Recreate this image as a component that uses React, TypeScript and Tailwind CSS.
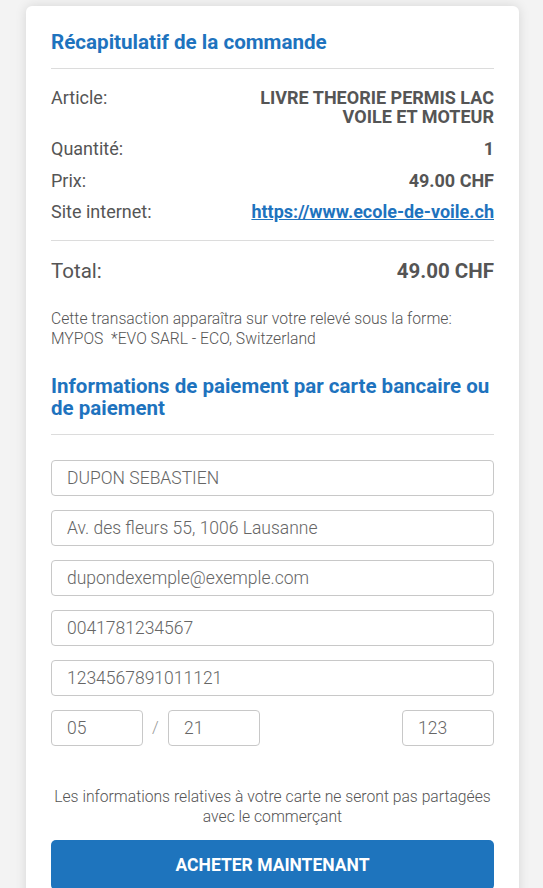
import React from "react";

const Row = ({ label, children }: { label: string; children: React.ReactNode }) => (
  <div className="flex justify-between items-start text-[18px] leading-[19px] text-[#555]">
    <span className="font-normal">{label}</span>
    <span className="font-bold text-right">{children}</span>
  </div>
);

const Field = ({ value, className = "" }: { value: string; className?: string }) => (
  <div
    className={`h-[36px] border border-[#c8c8c8] rounded-[4px] flex items-center pl-[15px] text-[17.5px] font-light text-[#666] bg-white ${className}`}
  >
    {value}
  </div>
);

export default function App() {
  return (
    <div
      className="min-h-[888px] bg-[#f3f3f3] pt-[6px] overflow-hidden"
      style={{ fontFamily: "Roboto, 'Liberation Sans', sans-serif" }}
    >
      <div className="ml-[26px] w-[493px] bg-white rounded-[6px] shadow-[0_0_12px_rgba(0,0,0,0.12)] px-[25px] pt-[24px] pb-[20px] min-h-[900px]">
        <h2 className="text-[20.6px] leading-[24px] font-bold text-[#1e73be]">Récapitulatif de la commande</h2>
        <div className="h-px bg-[#dcdcdc] mt-[14px]" />

        <div className="mt-[19px]">
          <Row label="Article:">
            LIVRE THEORIE PERMIS LAC
            <br />
            VOILE ET MOTEUR
          </Row>
        </div>
        <div className="mt-[13px]">
          <Row label="Quantité:">1</Row>
        </div>
        <div className="mt-[13px]">
          <Row label="Prix:">49.00 CHF</Row>
        </div>
        <div className="mt-[12px]">
          <Row label="Site internet:">
            <span className="text-[#1e73be] underline">https://www.ecole-de-voile.ch</span>
          </Row>
        </div>
        <div className="h-px bg-[#dcdcdc] mt-[19px]" />

        <div className="mt-[18px] flex justify-between text-[20.5px] leading-[24px] text-[#555]">
          <span>Total:</span>
          <span className="font-bold">49.00 CHF</span>
        </div>

        <p className="mt-[26px] text-[15.7px] leading-[20px] font-light text-[#555]">
          Cette transaction apparaîtra sur votre relevé sous la forme:
          <br />
          MYPOS&nbsp; *EVO SARL - ECO, Switzerland
        </p>

        <h2 className="mt-[26px] text-[20.5px] leading-[22px] font-bold text-[#1e73be]">
          Informations de paiement par carte bancaire ou de paiement
        </h2>
        <div className="h-px bg-[#dcdcdc] mt-[15px]" />

        <div className="mt-[25px] flex flex-col gap-[14px]">
          <Field value="DUPON SEBASTIEN" />
          <Field value="Av. des fleurs 55, 1006 Lausanne" />
          <Field value="dupondexemple@exemple.com" />
          <Field value="0041781234567" />
          <Field value="1234567891011121" />
          <div className="flex items-center">
            <Field value="05" className="w-[92px]" />
            <span className="w-[25px] text-center text-[17px] font-light text-[#999]">/</span>
            <Field value="21" className="w-[92px]" />
            <div className="flex-1" />
            <Field value="123" className="w-[92px]" />
          </div>
        </div>

        <p className="mt-[41px] text-center text-[15.7px] leading-[19.5px] font-light text-[#555]">
          Les informations relatives à votre carte ne seront pas partagées
          <br />
          avec le commerçant
        </p>

        <button className="mt-[14px] w-full h-[50px] rounded-[5px] bg-[#1e74bd] text-white font-bold text-[17.5px] uppercase">
          ACHETER MAINTENANT
        </button>
      </div>
    </div>
  );
}
